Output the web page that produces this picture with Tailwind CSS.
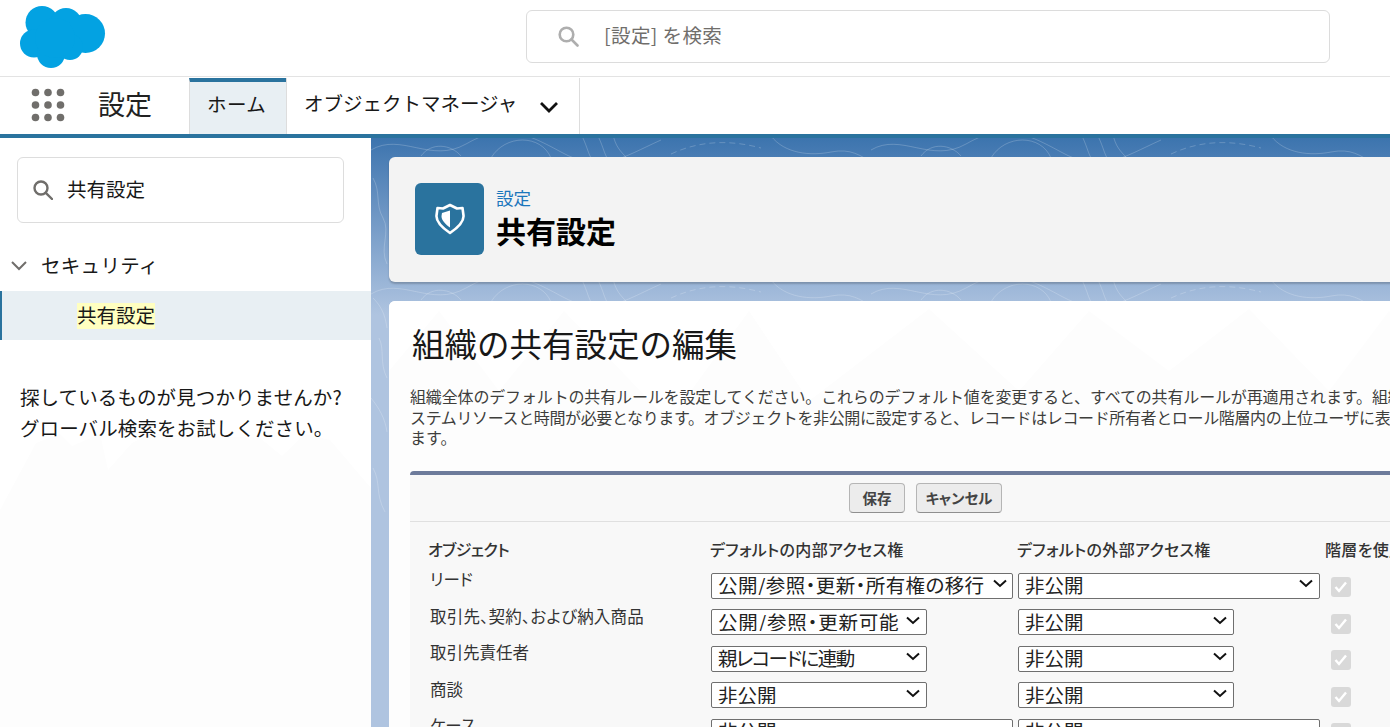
<!DOCTYPE html>
<html lang="ja">
<head>
<meta charset="utf-8">
<title>共有設定</title>
<script src="https://cdn.jsdelivr.net/npm/@tailwindcss/browser@4"></script>
</head>
<body class="m-0">
<div class="w-[1390px] h-[727px] overflow-hidden flex flex-col bg-white text-[#181818] font-['Noto_Sans_CJK_JP','Noto_Sans',sans-serif] text-[19.5px]">

  <!-- top header -->
  <header class="h-[77px] shrink-0 border-b border-[#e3e3e3] flex items-center relative">
    <svg class="absolute left-0 top-0" width="120" height="76" viewBox="0 0 120 76" fill="#03a2e2">
      <circle cx="42" cy="22.500" r="16.500"/><circle cx="66" cy="24" r="16"/><circle cx="85.500" cy="33.500" r="19.500"/><circle cx="34" cy="43.500" r="14"/><circle cx="51" cy="54" r="14"/><circle cx="70" cy="47" r="13"/><circle cx="55" cy="38" r="20"/>
    </svg>
    <div class="ml-[526px] w-[804px] h-[53px] border border-[#dcdcdc] rounded-[6px] flex items-center -mt-[3px]">
      <svg class="ml-[31px]" width="21" height="21" viewBox="0 0 21 21" fill="none" stroke="#aeaeae" stroke-width="2.600"><circle cx="8.500" cy="8.500" r="6.800"/><path d="M13.500 13.500L19.500 19.500" stroke-linecap="round"/></svg>
      <span class="ml-[25px] text-[#706e6b] leading-none tracking-[0.4px] pb-[4px]">[設定] を検索</span>
    </div>
  </header>

  <!-- nav -->
  <nav class="h-[61px] shrink-0 border-b-4 border-[#2a739e] flex pt-px">
    <div class="w-[189px] flex items-center shrink-0 pb-[2px]">
      <svg class="ml-[31px]" width="34" height="34" viewBox="0 0 34 34" fill="#706e6b">
        <circle cx="4.500" cy="4.500" r="3.800"/><circle cx="17" cy="4.500" r="3.800"/><circle cx="29.500" cy="4.500" r="3.800"/>
        <circle cx="4.500" cy="17" r="3.800"/><circle cx="17" cy="17" r="3.800"/><circle cx="29.500" cy="17" r="3.800"/>
        <circle cx="4.500" cy="29.500" r="3.800"/><circle cx="17" cy="29.500" r="3.800"/><circle cx="29.500" cy="29.500" r="3.800"/>
      </svg>
      <span class="ml-[33px] text-[27px] leading-none text-[#222] pb-[3px]">設定</span>
    </div>
    <div class="w-[97px] bg-[#e8eff3] border-t-4 border-t-[#2a739e] border-l border-[#dddddd] flex items-center pl-[17px] pb-[9px]"><span class="leading-none tracking-[0.4px]">ホーム</span></div>
    <div class="w-[294px] border-l border-r border-[#dddddd] flex items-center pl-[17px] pb-[6px]">
      <span class="leading-none w-[216px] whitespace-nowrap">オブジェクトマネージャ</span>
      <svg class="ml-[19px] mt-[8px]" width="20" height="14" viewBox="0 0 20 14" fill="none" stroke="#111" stroke-width="2.800"><path d="M2 3l8 8 8-8"/></svg>
    </div>
  </nav>

  <div class="flex-1 flex min-h-0">
    <!-- sidebar -->
    <aside class="w-[371px] shrink-0 bg-white relative overflow-hidden">
      <svg class="absolute left-0 top-0" width="371" height="589" viewBox="0 0 371 589" fill="#fdfdfd"><path d="M0 372L36 305 60 296 72 308 100 296 108 332 132 305 150 296 260 300 282 318 305 296 330 302 371 350V589H0Z"/></svg>
      <div class="relative">
        <div class="mt-[19px] ml-[17px] w-[327px] h-[66px] border border-[#dddddd] rounded-[6px] bg-white flex items-center pb-[3px]">
          <svg class="ml-[15px] mt-[3px]" width="20" height="20" viewBox="0 0 20 20" fill="none" stroke="#706e6b" stroke-width="2.400"><circle cx="8" cy="8" r="6.500"/><path d="M12.800 12.800L19 19" stroke-linecap="round"/></svg>
          <span class="ml-[14px] leading-none">共有設定</span>
        </div>
        <div class="mt-[21px] mb-[3px] h-[44px] flex items-center">
          <svg class="ml-[11px]" width="16" height="10" viewBox="0 0 16 10" fill="none" stroke="#706e6b" stroke-width="2"><path d="M1 1l7 7 7-7"/></svg>
          <span class="ml-[14px] leading-none tracking-[0.3px] pb-[2px]">セキュリティ</span>
        </div>
        <div class="h-[49px] bg-[#e8eff3] border-l-2 border-[#2a739e] flex items-center pl-[75px]">
          <span class="bg-[#ffffc0] leading-[23px] h-[26px] block">共有設定</span>
        </div>
        <p class="mt-[41px] ml-[20px] leading-[31px] whitespace-nowrap tracking-[0.1px]">探しているものが見つかりませんか?<br>グローバル検索をお試しください。</p>
      </div>
    </aside>

    <!-- main -->
    <main class="flex-1 min-w-0 relative overflow-hidden bg-linear-to-b from-[#3c74ae] from-0% to-[#afc4e0] to-[30%] pl-[18px] pt-[19px]">
      <svg class="absolute left-0 top-0" width="1019" height="589" viewBox="0 0 1019 589" fill="none" stroke="#ffffff" stroke-opacity=".2" stroke-width="1">
        <defs>
          <g id="topo">
            <path d="M0 12C30 -6 60 26 95 6S150 -8 190 14 250 20 290 2"/>
            <path d="M50 18c10-14 30-12 40 0M120 20c14-24 50-24 60 0"/>
            <path d="M210 -4c6 12 6 16 10 24M226 -4c6 12 6 16 10 24M242 -4c2 12 8 18 14 24"/>
            <path d="M300 16c30-14 60-14 90-6" stroke-dasharray="6 4"/>
            <path d="M400 -2c14 18 40 20 60 16s30 4 40 10"/>
          </g>
        </defs>
        <use href="#topo"/><use href="#topo" x="500"/>
        <use href="#topo" y="144"/><use href="#topo" x="500" y="144"/>
        <path d="M2 40c8 14 2 26 10 40s-4 30 4 46M8 200c6 12 0 24 8 40M2 160c8 8 12 16 14 30M0 260c8 10 14 20 16 34M2 330c8 14 2 26 12 44"/>
      </svg>

      <section class="relative w-[1100px] h-[125px] bg-[#f3f3f3] rounded-[6px] shadow-[0_2px_2px_rgba(0,0,0,0.2)] flex items-center pl-[26px]">
        <div class="w-[69px] h-[72px] rounded-[6px] bg-[#2a739e] flex items-center justify-center shrink-0 -mt-[2px]">
          <svg width="30" height="32" viewBox="0 0 30 32" fill="none"><path d="M15 2l7 3.500 5.500-.5 1 7.500c.5 6-7 13-13.500 17.500C8.500 25.500 1 18.500 1.500 12.500l1-7.500 5.500.5z" stroke="#fff" stroke-width="2.600" stroke-linejoin="round"/><path d="M15 7.500l-8 2.500-.5 3c-.3 4 4.500 9 8.500 11.500z" fill="#fff"/></svg>
        </div>
        <div class="ml-[12px] flex flex-col -mt-[4px]">
          <span class="text-[17.500px] leading-[22px] text-[#1b76bc]">設定</span>
          <h1 class="text-[30px] leading-[38px] font-bold text-black mt-[2px]">共有設定</h1>
        </div>
      </section>

      <section class="relative mt-[19px] w-[1100px] h-[500px] bg-[#fdfdfd] rounded-[6px] pt-[20px] pl-[21px] overflow-hidden">
        <svg class="absolute left-0 top-0" width="1100" height="180" viewBox="0 0 1100 180"><path d="M0 70L50 10 110 90 175 10 280 120 360 10 420 100 540 8 630 90 700 10 780 70 860 8 940 90 1000 10 1100 80V0H0Z" fill="#ffffff"/></svg>
        <h2 class="relative text-[32.500px] leading-[44px] text-[#181818] ml-[2px]">組織の共有設定の編集</h2>
        <p class="relative mt-[21px] text-[16px] leading-[20.500px] text-[#3e3e3c] whitespace-nowrap"><span class="tracking-[-0.15px]">組織全体のデフォルトの共有ルールを設定してください。これらのデフォルト値を変更すると、すべての共有ルールが再適用されます。組織の規模によって</span><br><span class="tracking-[-0.37px]">ステムリソースと時間が必要となります。オブジェクトを非公開に設定すると、レコードはレコード所有者とロール階層内の上位ユーザに表示</span><br>ます。</p>

        <div class="relative mt-[23.500px] w-[1060px] bg-[#f8f8f8] border-t-4 border-[#6d7b9b] rounded-t-[4px]">
          <div class="h-[47px] border-b border-[#e0e0e0] flex items-start pt-[8px] pl-[439px] gap-[11px]">
            <button class="w-[56px] h-[30px] rounded-[4px] border border-[#b5b5b5] border-b-[#8f8f8f] bg-[#ececec] text-[14.500px] font-bold text-[#444] leading-none">保存</button>
            <button class="w-[86px] h-[30px] rounded-[4px] border border-[#b5b5b5] border-b-[#8f8f8f] bg-[#ececec] text-[14.500px] font-bold text-[#444] leading-none [font-feature-settings:'palt']">キャンセル</button>
          </div>

          <div class="pt-[15px] grid grid-cols-[301px_307px_313px_1fr] grid-rows-[33.200px] auto-rows-[36.500px]">
            <div class="col-span-4 grid grid-cols-[301px_307px_313px_1fr] text-[16px] font-medium text-[#333] leading-[24px] [font-feature-settings:'palt'] tracking-[0.3px]">
              <span class="pl-[18px] tracking-[-0.5px]">オブジェクト</span><span class="-ml-px">デフォルトの内部アクセス権</span><span class="-ml-px">デフォルトの外部アクセス権</span><span class="-ml-[6px] whitespace-nowrap">階層を使用したアクセス許可</span>
            </div>

            <span class="pl-[20px] text-[16.500px] leading-[19px] text-[#333] [font-feature-settings:'palt']">リード</span>
            <div class="relative w-[302px] h-[26px]"><select class="appearance-none w-full h-full bg-white border border-[#6f6f6f] rounded-[2px] pl-[6px] pb-[2px] text-[19.500px] leading-none text-[#222] tracking-[0.4px] [font-feature-settings:'palt']"><option>公開/参照・更新・所有権の移行</option></select><svg class="absolute right-[6px] top-[9px]" width="14" height="9" viewBox="0 0 14 9" fill="none" stroke="#111" stroke-width="2"><path d="M1 1.500l6 5.500 6-5.500"/></svg></div>
            <div class="relative w-[302px] h-[26px]"><select class="appearance-none w-full h-full bg-white border border-[#6f6f6f] rounded-[2px] pl-[6px] pb-[2px] text-[19.500px] leading-none text-[#222]"><option>非公開</option></select><svg class="absolute right-[7px] top-[9px]" width="14" height="9" viewBox="0 0 14 9" fill="none" stroke="#111" stroke-width="2"><path d="M1 1.500l6 5.500 6-5.500"/></svg></div>
            <div class="mt-[7px] w-[20px] h-[20px] rounded-[3px] bg-[#d9d9d9] flex items-center justify-center"><svg width="14" height="12" viewBox="0 0 14 12" fill="none" stroke="#fff" stroke-width="2.400"><path d="M1.500 6l3.500 4 7-8.500"/></svg></div>

            <span class="pl-[20px] text-[16.500px] leading-[19px] text-[#333] tracking-[0.2px] [font-feature-settings:'palt'] whitespace-nowrap">取引先、契約、および納入商品</span>
            <div class="relative w-[216px] h-[26px]"><select class="appearance-none w-full h-full bg-white border border-[#6f6f6f] rounded-[2px] pl-[6px] pb-[2px] text-[19.500px] leading-none text-[#222] tracking-[0.8px] [font-feature-settings:'palt']"><option>公開/参照・更新可能</option></select><svg class="absolute right-[7px] top-[9px]" width="14" height="9" viewBox="0 0 14 9" fill="none" stroke="#111" stroke-width="2"><path d="M1 1.500l6 5.500 6-5.500"/></svg></div>
            <div class="relative w-[216px] h-[26px]"><select class="appearance-none w-full h-full bg-white border border-[#6f6f6f] rounded-[2px] pl-[6px] pb-[2px] text-[19.500px] leading-none text-[#222]"><option>非公開</option></select><svg class="absolute right-[7px] top-[9px]" width="14" height="9" viewBox="0 0 14 9" fill="none" stroke="#111" stroke-width="2"><path d="M1 1.500l6 5.500 6-5.500"/></svg></div>
            <div class="mt-[7px] w-[20px] h-[20px] rounded-[3px] bg-[#d9d9d9] flex items-center justify-center"><svg width="14" height="12" viewBox="0 0 14 12" fill="none" stroke="#fff" stroke-width="2.400"><path d="M1.500 6l3.500 4 7-8.500"/></svg></div>

            <span class="pl-[20px] text-[16.500px] leading-[19px] text-[#333] [font-feature-settings:'palt']">取引先責任者</span>
            <div class="relative w-[216px] h-[26px]"><select class="appearance-none w-full h-full bg-white border border-[#6f6f6f] rounded-[2px] pl-[6px] pb-[2px] text-[19.500px] leading-none text-[#222] tracking-[-1.5px] [font-feature-settings:'palt']"><option>親レコードに連動</option></select><svg class="absolute right-[7px] top-[9px]" width="14" height="9" viewBox="0 0 14 9" fill="none" stroke="#111" stroke-width="2"><path d="M1 1.500l6 5.500 6-5.500"/></svg></div>
            <div class="relative w-[216px] h-[26px]"><select class="appearance-none w-full h-full bg-white border border-[#6f6f6f] rounded-[2px] pl-[6px] pb-[2px] text-[19.500px] leading-none text-[#222]"><option>非公開</option></select><svg class="absolute right-[7px] top-[9px]" width="14" height="9" viewBox="0 0 14 9" fill="none" stroke="#111" stroke-width="2"><path d="M1 1.500l6 5.500 6-5.500"/></svg></div>
            <div class="mt-[7px] w-[20px] h-[20px] rounded-[3px] bg-[#d9d9d9] flex items-center justify-center"><svg width="14" height="12" viewBox="0 0 14 12" fill="none" stroke="#fff" stroke-width="2.400"><path d="M1.500 6l3.500 4 7-8.500"/></svg></div>

            <span class="pl-[20px] text-[16.500px] leading-[19px] text-[#333] [font-feature-settings:'palt']">商談</span>
            <div class="relative w-[216px] h-[26px]"><select class="appearance-none w-full h-full bg-white border border-[#6f6f6f] rounded-[2px] pl-[6px] pb-[2px] text-[19.500px] leading-none text-[#222]"><option>非公開</option></select><svg class="absolute right-[7px] top-[9px]" width="14" height="9" viewBox="0 0 14 9" fill="none" stroke="#111" stroke-width="2"><path d="M1 1.500l6 5.500 6-5.500"/></svg></div>
            <div class="relative w-[216px] h-[26px]"><select class="appearance-none w-full h-full bg-white border border-[#6f6f6f] rounded-[2px] pl-[6px] pb-[2px] text-[19.500px] leading-none text-[#222]"><option>非公開</option></select><svg class="absolute right-[7px] top-[9px]" width="14" height="9" viewBox="0 0 14 9" fill="none" stroke="#111" stroke-width="2"><path d="M1 1.500l6 5.500 6-5.500"/></svg></div>
            <div class="mt-[7px] w-[20px] h-[20px] rounded-[3px] bg-[#d9d9d9] flex items-center justify-center"><svg width="14" height="12" viewBox="0 0 14 12" fill="none" stroke="#fff" stroke-width="2.400"><path d="M1.500 6l3.500 4 7-8.500"/></svg></div>

            <span class="pl-[20px] text-[16.500px] leading-[19px] text-[#333] [font-feature-settings:'palt']">ケース</span>
            <div class="relative w-[302px] h-[26px]"><select class="appearance-none w-full h-full bg-white border border-[#6f6f6f] rounded-[2px] pl-[6px] pb-[2px] text-[19.500px] leading-none text-[#222]"><option>非公開</option></select></div>
            <div class="relative w-[302px] h-[26px]"><select class="appearance-none w-full h-full bg-white border border-[#6f6f6f] rounded-[2px] pl-[6px] pb-[2px] text-[19.500px] leading-none text-[#222]"><option>非公開</option></select></div>
            <div class="mt-[7px] w-[20px] h-[20px] rounded-[3px] bg-[#d9d9d9]"></div>
          </div>
        </div>
      </section>
    </main>
  </div>
</div>
</body>
</html>
